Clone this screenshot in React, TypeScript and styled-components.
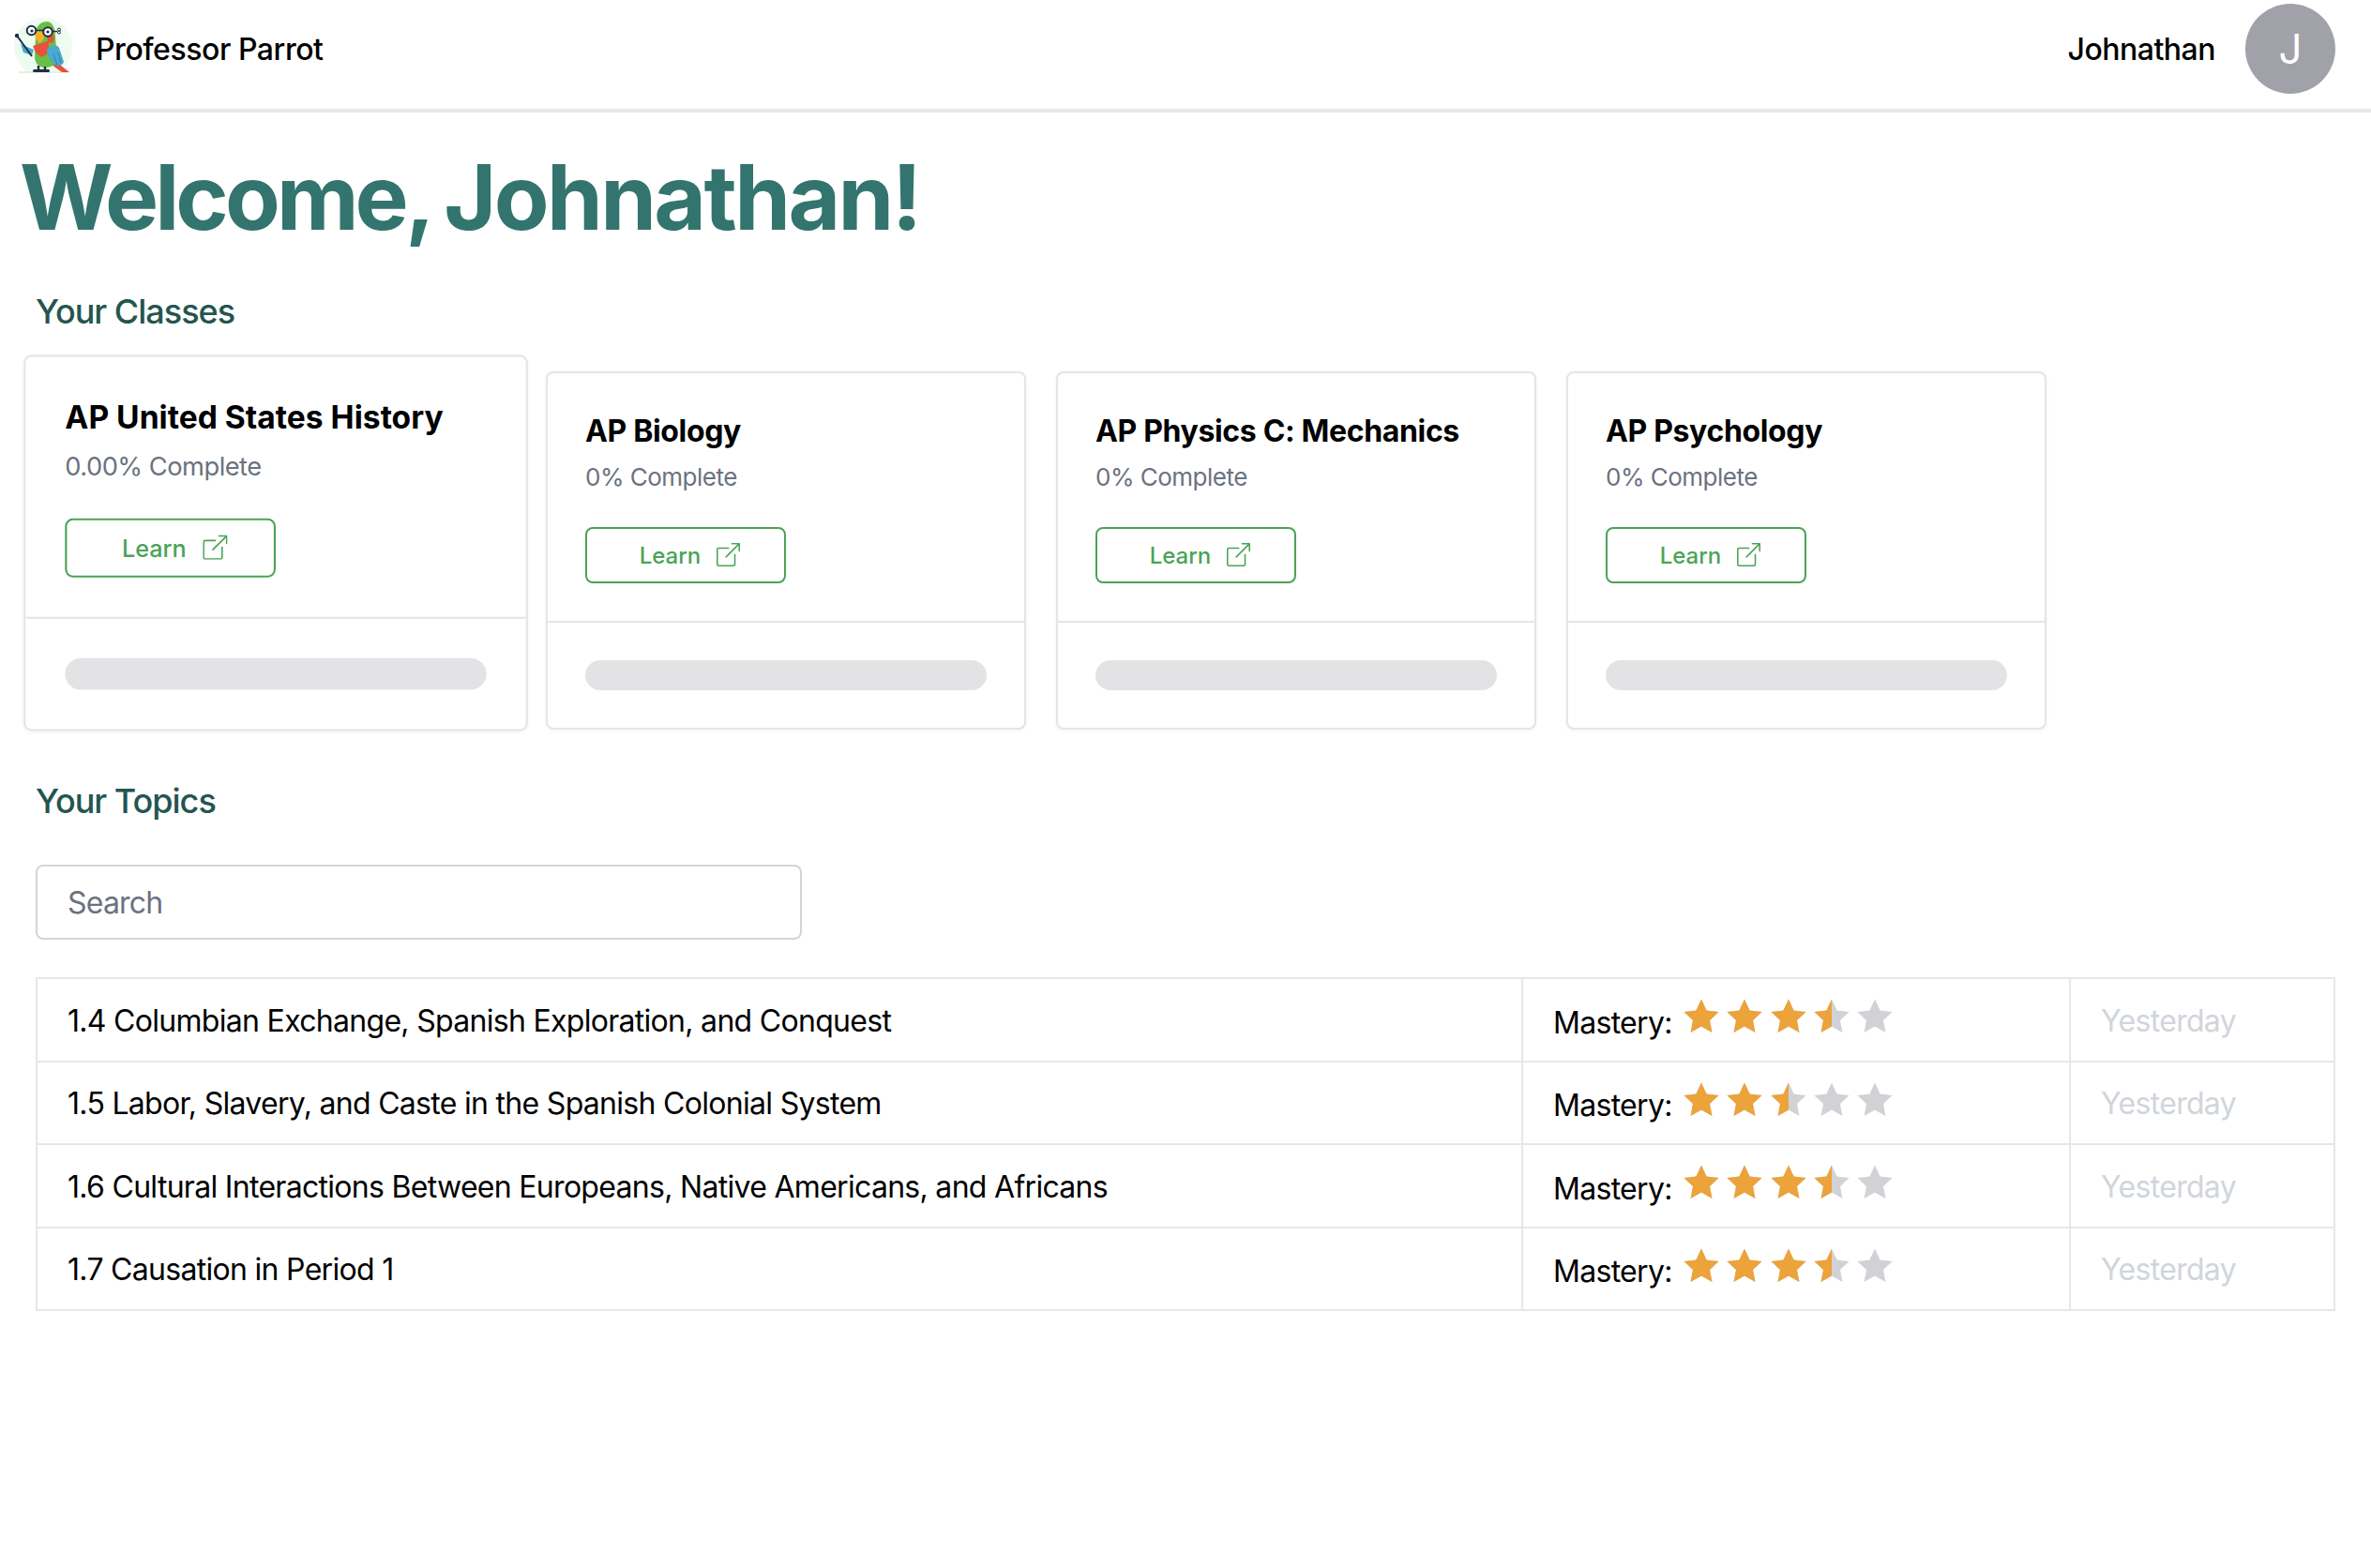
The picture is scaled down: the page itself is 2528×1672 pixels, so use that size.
import React, { FC } from "react";
import styled, { createGlobalStyle } from "styled-components";
import { BsBoxArrowUpRight } from "react-icons/bs";

const classes = [
  { name: "AP United States History", progress: "0.00%", active: true },
  { name: "AP Biology", progress: "0%", active: false },
  { name: "AP Physics C: Mechanics", progress: "0%", active: false },
  { name: "AP Psychology", progress: "0%", active: false },
];

const topics = [
  { name: "1.4 Columbian Exchange, Spanish Exploration, and Conquest", mastery: 3.5 },
  { name: "1.5 Labor, Slavery, and Caste in the Spanish Colonial System", mastery: 2.5 },
  { name: "1.6 Cultural Interactions Between Europeans, Native Americans, and Africans", mastery: 3.5 },
  { name: "1.7 Causation in Period 1", mastery: 3.5 },
];

const STAR_PATH =
  "M19 0.5l5.6 11.9 13 1.7-9.6 9 2.5 12.9L19 29.6 7.5 36l2.5-12.9-9.6-9 13-1.7z";

const Star: FC<{ fill: number; id: string }> = ({ fill, id }) => (
  <svg width="38" height="36" viewBox="0 0 38 36">
    <clipPath id={id}>
      <rect x="0" y="0" width={38 * fill} height="36" />
    </clipPath>
    <path d={STAR_PATH} fill="#d2d2d6" />
    <path d={STAR_PATH} fill="#eba33a" clipPath={`url(#${id})`} />
  </svg>
);

const ParrotLogo: FC = () => (
  <svg width="96" height="96" viewBox="0 4 96 96">
    <circle cx="46" cy="50" r="31" fill="#eefbf0" />
    <rect x="15" y="76" width="62" height="6" fill="#fff" />
    <rect x="20" y="76.5" width="53" height="1" fill="#bfe6cc" />
    <path d="M60 66l14 11h-8l-11-8z" fill="#e8513a" />
    <path d="M38 38c-1-9 5-15 12-15 6 0 9 7 9 16l2 24c0 6-7 9-13 9-7 0-11-5-11-12z" fill="#68bf45" />
    <path d="M22 47l14 6-2 6-9-3z" fill="#4ba8cf" />
    <path d="M35 49l16-5 2 12-9 5-6-5z" fill="#e8513a" />
    <path d="M50 36l8 2-1 7-6 1z" fill="#e8513a" />
    <path d="M50 53c4-5 11-6 13-2l5 15c-1 3-4 5-7 4-6-3-11-10-11-17z" fill="#4ba8cf" />
    <path d="M57 58l4 11M62 56l3 11" stroke="#2d86ad" strokeWidth="1" />
    <path d="M41 70v6M48 71v5" stroke="#1e2f45" strokeWidth="2.5" />
    <rect x="35" y="74" width="18" height="3" rx="1.5" fill="#1e2f45" />
    <path d="M18 38l16 22" stroke="#1e2f45" strokeWidth="2" />
    <circle cx="18" cy="38" r="2.2" fill="#1e2f45" />
    <path d="M37 33h11c1 5-2 11-6 13-3-3-6-8-5-13z" fill="#f5b027" />
    <circle cx="33.5" cy="32.5" r="4.8" fill="#fff" stroke="#1e2f45" strokeWidth="2" />
    <circle cx="51" cy="34" r="4.8" fill="#fff" stroke="#1e2f45" strokeWidth="2" />
    <circle cx="34" cy="33" r="1.6" fill="#1e2f45" />
    <circle cx="51" cy="34" r="1.6" fill="#1e2f45" />
    <path d="M38.5 32.5h7.5M56 33.5h5" stroke="#1e2f45" strokeWidth="1.5" />
    <circle cx="63" cy="31.5" r="1.5" fill="none" stroke="#1e2f45" strokeWidth="1" />
    <circle cx="63" cy="34.5" r="1.5" fill="none" stroke="#1e2f45" strokeWidth="1" />
  </svg>
);

const App: FC = () => {
  return (
    <>
      <GlobalStyle />
      <NavBar>
        <Brand>
          <ParrotLogo />
          <BrandName>Professor Parrot</BrandName>
        </Brand>
        <UserArea>
          <UserName>Johnathan</UserName>
          <Avatar>J</Avatar>
        </UserArea>
      </NavBar>

      <Main>
        <Welcome>
          <Greeting>Welcome,</Greeting> Johnathan!
        </Welcome>

        <ClassesHeading>Your Classes</ClassesHeading>
        <ClassRow>
          {classes.map((item) => (
            <ClassCard key={item.name} $active={item.active}>
              <CardBody>
                <CardTitle $active={item.active}>{item.name}</CardTitle>
                <CardProgress>{item.progress} Complete</CardProgress>
                <LearnButton>
                  Learn
                  <BsBoxArrowUpRight size={25} />
                </LearnButton>
              </CardBody>
              <CardFooter>
                <ProgressTrack />
              </CardFooter>
            </ClassCard>
          ))}
        </ClassRow>

        <TopicsHeading>Your Topics</TopicsHeading>
        <SearchInput placeholder="Search" />

        <TopicTable>
          <tbody>
            {topics.map((topic, rowIndex) => (
              <tr key={topic.name}>
                <NameCell>{topic.name}</NameCell>
                <MasteryCell>
                  <MasteryWrap>
                    <MasteryLabel>Mastery:</MasteryLabel>
                    <Stars>
                      {[0, 1, 2, 3, 4].map((i) => (
                        <Star
                          key={i}
                          id={`star-${rowIndex}-${i}`}
                          fill={Math.max(0, Math.min(1, topic.mastery - i))}
                        />
                      ))}
                    </Stars>
                  </MasteryWrap>
                </MasteryCell>
                <DateCell>Yesterday</DateCell>
              </tr>
            ))}
          </tbody>
        </TopicTable>
      </Main>
    </>
  );
};

const GlobalStyle = createGlobalStyle`
  * {
    box-sizing: border-box;
  }

  body {
    margin: 0;
    background: #fff;
    color: #000;
    font-family: Inter, "Noto Sans", sans-serif;
  }
`;

const NavBar = styled.header`
  height: 120px;
  padding: 4px 38px 16px 0;
  display: flex;
  align-items: center;
  justify-content: space-between;
  border-bottom: 4px solid #e5e7eb;
`;

const Brand = styled.div`
  display: flex;
  align-items: center;
  gap: 6px;
`;

const BrandName = styled.span`
  font-size: 32px;
  font-weight: 500;
  letter-spacing: -0.45px;
`;

const UserArea = styled.div`
  display: flex;
  align-items: center;
  gap: 32px;
`;

const UserName = styled.span`
  font-size: 32px;
  font-weight: 500;
  letter-spacing: -0.5px;
`;

const Avatar = styled.div`
  width: 96px;
  height: 96px;
  border-radius: 50%;
  background: #a1a1aa;
  color: #fff;
  font-size: 44px;
  display: flex;
  align-items: center;
  justify-content: center;
`;

const Main = styled.main`
  padding: 0 38px;
`;

const Welcome = styled.h1`
  margin: 0 0 0 -17px;
  padding-top: 30px;
  font-size: 96px;
  line-height: 120px;
  font-weight: 700;
  letter-spacing: -2.6px;
  word-spacing: -7px;
  color: #33756e;
`;

const Greeting = styled.span`
  letter-spacing: -3.9px;
`;

const SectionHeading = styled.h2`
  margin: 0;
  font-size: 36px;
  line-height: 48px;
  font-weight: 500;
  letter-spacing: -1px;
  color: #24554f;
`;

const ClassesHeading = styled(SectionHeading)`
  margin-top: 38px;
`;

const TopicsHeading = styled(SectionHeading)`
  margin-top: 52px;
`;

const ClassRow = styled.section`
  display: flex;
  gap: 32px;
  margin-top: 40px;
`;

const ClassCard = styled.article<{ $active: boolean }>`
  width: 512px;
  height: 382px;
  background: #fff;
  border: 2px solid #e5e5e7;
  border-radius: 8px;
  display: flex;
  flex-direction: column;
  box-shadow: 0 1px 4px rgba(0, 0, 0, 0.05);
  transform: ${({ $active }) =>
    $active ? "translateY(-8px) scale(1.05)" : "none"};
`;

const CardBody = styled.div`
  height: 266px;
  padding: 40px 40px 0;
  border-bottom: 2px solid #e5e5e7;
`;

const CardTitle = styled.h3<{ $active: boolean }>`
  margin: 0;
  font-size: 32px;
  line-height: 44px;
  font-weight: 700;
  letter-spacing: ${({ $active }) => ($active ? "0" : "-0.35px")};
`;

const CardProgress = styled.p`
  margin: 7px 0 0;
  font-size: 26px;
  line-height: 40px;
  letter-spacing: -0.5px;
  color: #6b7280;
`;

const LearnButton = styled.button`
  margin-top: 33px;
  width: 214px;
  height: 60px;
  padding: 0 0 0 9px;
  background: #fff;
  border: 2px solid #4ba355;
  border-radius: 8px;
  color: #4ba355;
  font-family: inherit;
  font-size: 24px;
  font-weight: 500;
  display: flex;
  align-items: center;
  justify-content: center;
  gap: 17px;

  svg {
    margin-top: -2px;
  }
`;

const CardFooter = styled.div`
  flex: 1;
  padding: 40px 40px 0;
`;

const ProgressTrack = styled.div`
  height: 32px;
  border-radius: 16px;
  background: #e3e3e5;
`;

const SearchInput = styled.input`
  display: block;
  margin-top: 44px;
  width: 817px;
  height: 80px;
  padding: 0 32px;
  border: 2px solid #d1d5db;
  border-radius: 8px;
  font-family: inherit;
  font-size: 32px;
  letter-spacing: -0.8px;
  outline: none;

  &::placeholder {
    color: #6b7280;
  }
`;

const TopicTable = styled.table`
  margin-top: 40px;
  width: 2452px;
  table-layout: fixed;
  border-collapse: collapse;

  td {
    height: 88.5px;
    padding: 2px 32px 0;
    border: 2px solid #e5e7eb;
    font-size: 32px;
    letter-spacing: -0.7px;
  }
`;

const NameCell = styled.td`
  width: 1584px;
`;

const MasteryCell = styled.td`
  width: 584px;
`;

const DateCell = styled.td`
  color: #d1d5db;
`;

const MasteryWrap = styled.div`
  display: flex;
  align-items: center;
  gap: 12px;
`;

const MasteryLabel = styled.span`
  padding-top: 4px;
`;

const Stars = styled.div`
  display: flex;
  gap: 8.4px;
  margin-bottom: 10px;
`;

export default App;
